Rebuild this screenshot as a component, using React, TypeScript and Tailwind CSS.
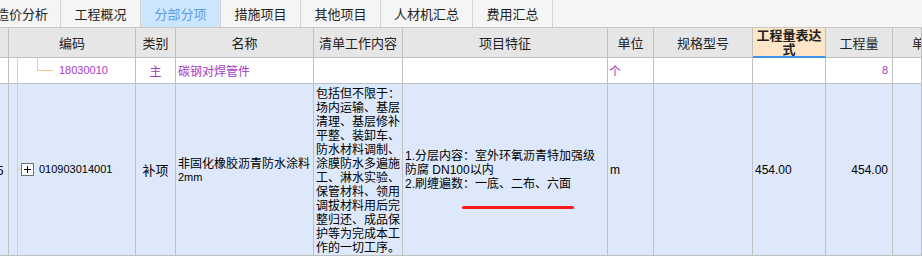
const tabs = [
  { label: '造价分析', w: 'w-[61px]', cut: true },
  { label: '工程概况', w: 'w-[80px]' },
  { label: '分部分项', w: 'w-[80px]', active: true },
  { label: '措施项目', w: 'w-[80px]' },
  { label: '其他项目', w: 'w-[80px]' },
  { label: '人材机汇总', w: 'w-[92px]' },
  { label: '费用汇总', w: 'w-[80px]' },
];

const cols = 'grid grid-cols-[9px_127px_40px_138px_89px_205px_46px_99px_73px_67px_1fr]';
const cell = 'border-r border-b border-[#c0c0c0] overflow-hidden';
const purple = 'text-[#a33cc4]';
const num = "font-['Liberation_Sans',sans-serif] text-[11px]";

const workLines = [
  '包括但不限于：',
  '场内运输、基层',
  '清理、基层修补',
  '平整、装卸车、',
  '防水材料调制、',
  '涂膜防水多遍施',
  '工、淋水实验、',
  '保管材料、领用',
  '调拔材料用后完',
  '整归还、成品保',
  '护等为完成本工',
  '作的一切工序。',
];

const featureLines = ['1.分层内容：室外环氧沥青特加强级', '防腐 DN100以内', '2.刷缠遍数：一底、二布、六面'];

function Tabs() {
  return (
    <div className="flex h-[28px] bg-[#f5f5f5] border-b border-[#c8c8c8]">
      {tabs.map((t) => (
        <div
          key={t.label}
          className={`${t.w} shrink-0 flex items-center border-r border-[#d4d4d4] overflow-hidden whitespace-nowrap text-[13px] ${
            t.cut ? 'justify-end pr-[12px]' : 'justify-center'
          } ${t.active ? 'bg-[#cce6ff] text-[#5f9ce8]' : 'text-[#222]'}`}
        >
          {t.label}
        </div>
      ))}
    </div>
  );
}

function Header() {
  const h = `${cell} flex items-center justify-center text-[13px] text-[#222] bg-[#e6e6e6]`;
  return (
    <div className={`${cols} h-[30px]`}>
      <div className={h} />
      <div className={h}>编码</div>
      <div className={h}>类别</div>
      <div className={h}>名称</div>
      <div className={h}>清单工作内容</div>
      <div className={h}>项目特征</div>
      <div className={h}>单位</div>
      <div className={h}>规格型号</div>
      <div className="border-r border-b-2 border-[#c0c0c0] border-b-[#3d95f0] bg-[#fde6c8] flex items-center justify-center text-center text-[13px] leading-[14px] font-bold text-[#222] px-[3px]">
        工程量表达式
      </div>
      <div className={h}>工程量</div>
      <div className={`${h} !justify-start pl-[19px] whitespace-nowrap`}>单价</div>
    </div>
  );
}

function SubRow() {
  return (
    <div className={`${cols} h-[26px] bg-white text-[12px]`}>
      <div className={cell} />
      <div className={`${cell} relative flex items-center pl-[50px] ${purple} ${num}`}>
        <span className="absolute left-[8px] top-0 bottom-0 w-px bg-[#f9c98a]" />
        <span className="absolute left-[28px] top-0 h-[13px] w-[16px] border-l border-b border-[#f9c98a]" />
        18030010
      </div>
      <div className={`${cell} flex items-center justify-center ${purple}`}>主</div>
      <div className={`${cell} flex items-center pl-[2px] ${purple}`}>碳钢对焊管件</div>
      <div className={cell} />
      <div className={cell} />
      <div className={`${cell} flex items-center pl-[1px] ${purple}`}>个</div>
      <div className={cell} />
      <div className={cell} />
      <div className={`${cell} flex items-center justify-end pr-[4px] ${purple} ${num}`}>8</div>
      <div className={cell} />
    </div>
  );
}

function MainRow() {
  const c = `${cell} flex items-center bg-[#dde9fb] text-[12px] text-black`;
  return (
    <div className={`${cols} h-[172px]`}>
      <div className={`${c} !overflow-hidden`}>
        <span className="-ml-[3px] text-[12px]">5</span>
      </div>
      <div className={`${c} relative pl-[12px]`}>
        <span className="absolute left-[8px] top-0 bottom-0 w-px bg-[#f9c98a]" />
        <span className="absolute left-[8px] top-[85px] w-[4px] h-px bg-[#f9c98a]" />
        <svg width="13" height="13" viewBox="0 0 13 13" className="shrink-0">
          <rect x="0.5" y="0.5" width="12" height="12" fill="white" stroke="#707070" />
          <path d="M3 6.5h7M6.5 3v7" stroke="#000" strokeWidth="1" />
        </svg>
        <span className={`ml-[5px] ${num}`}>010903014001</span>
      </div>
      <div className={`${c} justify-center text-[13px]`}>补项</div>
      <div className={`${c} pl-[2px]`}>
        <div className="leading-[14px]">
          <div className="whitespace-nowrap">非固化橡胶沥青防水涂料</div>
          <div className={num}>2mm</div>
        </div>
      </div>
      <div className={`${c} pl-[2px]`}>
        <div className="leading-[14px]">
          {workLines.map((l) => (
            <div key={l} className="whitespace-nowrap">
              {l}
            </div>
          ))}
        </div>
      </div>
      <div className={`${c} relative pl-[2px] font-['Liberation_Sans','Noto_Sans_CJK_SC',sans-serif]`}>
        <div className="leading-[14px]">
          {featureLines.map((l) => (
            <div key={l} className="whitespace-nowrap">
              {l}
            </div>
          ))}
        </div>
        <span className="absolute left-[59px] top-[122px] w-[112px] h-[3px] rounded-full bg-[#ff1a1a]" />
      </div>
      <div className={`${c} pl-[2px] ${num}`}>m</div>
      <div className={c} />
      <div className={`${c} pl-[2px] ${num}`}>454.00</div>
      <div className={`${c} justify-end pr-[4px] ${num}`}>454.00</div>
      <div className={c} />
    </div>
  );
}

export default function App() {
  return (
    <div className="w-[922px] h-[256px] overflow-hidden bg-white font-['Noto_Sans_CJK_SC',sans-serif]">
      <Tabs />
      <Header />
      <SubRow />
      <MainRow />
    </div>
  );
}
